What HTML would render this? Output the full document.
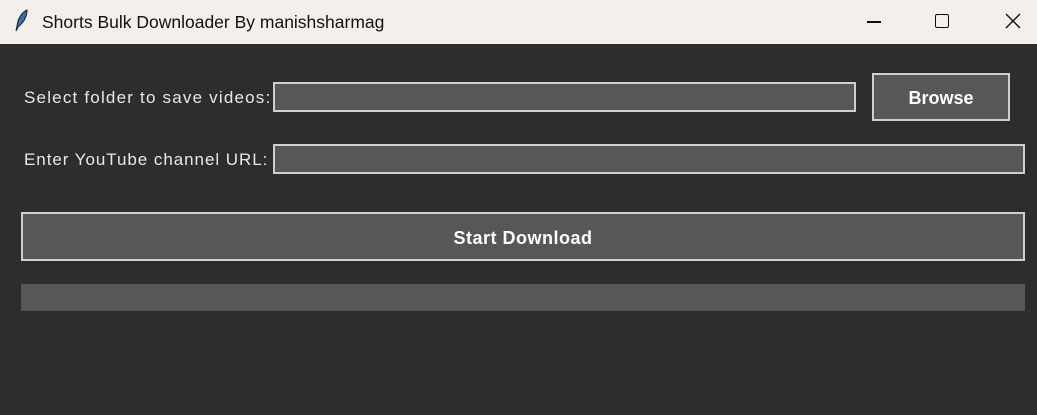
<!DOCTYPE html><html><head><style>
body{margin:0;width:1037px;height:415px;background:#2d2d2d;font-family:"Liberation Sans",sans-serif;position:relative;overflow:hidden}
.tb{position:absolute;left:0;top:0;width:1037px;height:44px;background:#f3f0ec}
.t{position:absolute;left:42px;top:12px;font-size:17.5px;color:#111;white-space:nowrap}
.a{position:absolute;box-sizing:border-box}
.e{background:#575757;border:2px solid #d0cfc8}
.l{color:#e8e8e8;font-size:17px;letter-spacing:1px;position:absolute;white-space:nowrap}
.b{background:#575757;border:2px solid #d0cfc8;color:#fff;font-weight:bold;font-size:18px;display:flex;align-items:center;justify-content:center}
</style></head><body>
<div class="tb"></div>
<svg class="a" style="left:14px;top:9px" width="16" height="24" viewBox="0 0 16 24"><path d="M13 1C7 4 4 10 3 17L2 22 4 18C9 14 13 8 13 1Z" fill="#3a6fb0" stroke="#123" stroke-width="1"/></svg>
<div class="t">Shorts Bulk Downloader By manishsharmag</div>
<div class="a" style="left:867px;top:21px;width:14px;height:1.5px;background:#111"></div>
<div class="a" style="left:935px;top:14px;width:14px;height:14px;border:1.5px solid #111;border-radius:2px"></div>
<svg class="a" style="left:1005px;top:13px" width="16" height="16"><path d="M1 1L15 15M15 1L1 15" stroke="#111" stroke-width="1.4"/></svg>
<div class="l" style="left:24px;top:88px;letter-spacing:1.2px">Select folder to save videos:</div>
<div class="a e" style="left:273px;top:82px;width:583px;height:30px"></div>
<div class="a b" style="left:872px;top:73px;width:138px;height:48px;padding-top:2px">Browse</div>
<div class="l" style="left:24px;top:150px;letter-spacing:0.95px">Enter YouTube channel URL:</div>
<div class="a e" style="left:273px;top:144px;width:752px;height:30px"></div>
<div class="a b" style="left:21px;top:212px;width:1004px;height:49px;letter-spacing:0.5px;padding-top:3px">Start Download</div>
<div class="a" style="left:21px;top:284px;width:1004px;height:27px;background:#575757"></div>
</body></html>
